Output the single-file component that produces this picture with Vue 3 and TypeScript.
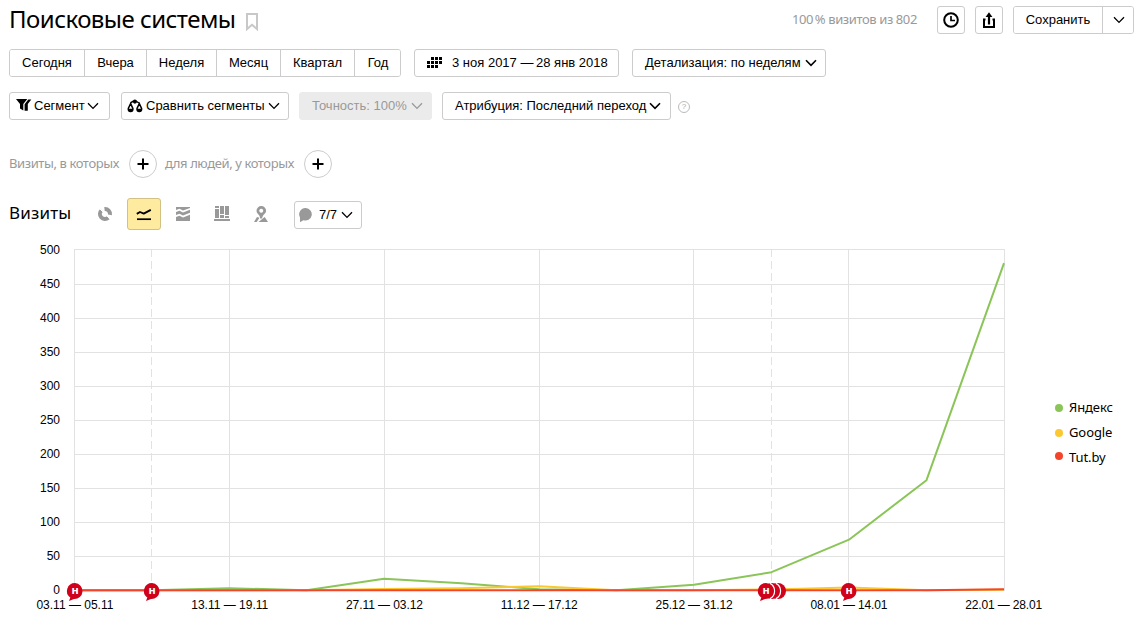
<script setup lang="ts">
interface Period { label: string; width: number }
interface Series { name: string; color: string; ys: number[] }
interface Marker { x: number; extra: number }

const periods: Period[] = [
  { label: 'Сегодня', width: 76 },
  { label: 'Вчера', width: 62 },
  { label: 'Неделя', width: 70 },
  { label: 'Месяц', width: 64 },
  { label: 'Квартал', width: 74 },
  { label: 'Год', width: 46 },
]

const left = 74
const step = 77.5
const rowStep = 34

const yLabels: number[] = [500, 450, 400, 350, 300, 250, 200, 150, 100, 50, 0]
const xLabels: string[] = [
  '03.11 — 05.11', '13.11 — 19.11', '27.11 — 03.12', '11.12 — 17.12',
  '25.12 — 31.12', '08.01 — 14.01', '22.01 — 28.01',
]

const series: Series[] = [
  { name: 'Яндекс', color: '#8bc558', ys: [350, 350, 348, 350, 338.5, 343, 349, 350, 344.5, 332, 299.5, 240, 23] },
  { name: 'Google', color: '#fbc831', ys: [350, 350, 350, 350, 348.8, 348, 346, 350, 350, 349.2, 347.3, 350, 349.5] },
  { name: 'Tut.by', color: '#f4452a', ys: [350, 350, 350, 350, 350, 350, 350, 350, 350, 350, 350, 350, 349] },
]

const markers: Marker[] = [
  { x: 75, extra: 0 },
  { x: 152, extra: 0 },
  { x: 766, extra: 2 },
  { x: 849, extra: 0 },
]

const gridX = (i: number): number => Math.floor(left + i * (step * 2 - 0.1)) + 0.5
const gridXs: number[] = [74.5, 229.5, 384.5, 539.5, gridX(4), gridX(5), 1004.5]
const gridY = (i: number): number => i === 0 ? 9.5 : 10.5 + i * rowStep
const points = (ys: number[]): string => ys.map((y, i) => `${left + i * step},${y + 0.2}`).join(' ')
</script>

<template>
  <div class="page">
    <header class="header">
      <h1>Поисковые системы</h1>
      <svg class="bookmark" width="14" height="20" viewBox="0 0 14 20"><path d="M2 2H12V17L7 12.8L2 17Z" fill="none" stroke="#c8c8c8" stroke-width="2" /></svg>
      <span class="visits">100&#8201;% визитов из 802</span>
      <button class="btn square">
        <svg width="18" height="18" viewBox="0 0 18 18" fill="none" stroke="#000" stroke-width="2"><circle cx="9" cy="9" r="6.8" /><path d="M9 5V9.5H13" stroke-width="1.7" /></svg>
      </button>
      <button class="btn square share">
        <svg width="18" height="18" viewBox="0 0 18 18"><path d="M5.5 8.5H4V16H14V8.5H12.5" fill="none" stroke="#000" stroke-width="2" /><path d="M9 13.5V4" stroke="#000" stroke-width="2.2" /><path d="M5.6 6L9 1.2L12.4 6Z" /></svg>
      </button>
      <div class="group save">
        <button class="save-main">Сохранить</button>
        <button class="save-more"><svg class="chev" width="12" height="8" viewBox="0 0 12 8"><path d="M1 1.2L6 6.4L11 1.2" /></svg></button>
      </div>
    </header>

    <div class="row periods">
      <div class="group">
        <button v-for="p in periods" :key="p.label" :style="{ width: p.width + 'px' }">{{ p.label }}</button>
      </div>
      <button class="btn date">
        <svg width="16" height="12" viewBox="0 0 16 12"><path d="M4 0h3v3h-3zM8 0h3v3h-3zM12 0h3v3h-3zM0 4h3v3h-3zM4 4h3v3h-3zM8 4h3v3h-3zM12 4h3v3h-3zM0 8h3v3h-3zM4 8h3v3h-3zM8 8h3v3h-3z" /></svg>
        <span class="date-text">3 ноя 2017 —&#8201;28 янв 2018</span>
      </button>
      <button class="btn detail"><span>Детализация: по неделям</span><svg class="chev bold" width="12" height="8" viewBox="0 0 12 8"><path d="M1 1.2L6 6.4L11 1.2" /></svg></button>
    </div>

    <div class="row segments">
      <button class="btn segment">
        <svg class="funnel" width="16" height="13" viewBox="0 0 16 13"><path d="M0 0H11.3L7.3 5V11.5L4 9.5V5Z" /><path d="M12.3 .6H15.3L11.8 5V11.8H8.6V5.3Z" /></svg>
        <span>Сегмент</span><svg class="chev" width="12" height="8" viewBox="0 0 12 8"><path d="M1 1.2L6 6.4L11 1.2" /></svg>
      </button>
      <button class="btn compare">
        <svg class="scales" width="16" height="14" viewBox="0 0 16 14"><g fill="none" stroke="#000" stroke-width="1.5"><path d="M3.6 4.6L1.3 9.4Q1 12.5 3.6 12.5Q6.2 12.5 5.9 9.4Z" /><path d="M12.3 4.6L10 9.4Q9.7 12.5 12.3 12.5Q14.9 12.5 14.6 9.4Z" /></g><path d="M1.2 9.8H6Q6 12.8 3.6 12.8T1.2 9.8M9.9 9.8H14.7Q14.7 12.8 12.3 12.8T9.9 9.8M3.4 3L5.9 1.6L6.4 3L3.9 4.6ZM9.6 1.8L12 3.2L12 4.6L9.2 3.2Z" /><circle cx="7.9" cy="2.6" r="2.1" /></svg>
        <span>Сравнить сегменты</span><svg class="chev" width="12" height="8" viewBox="0 0 12 8"><path d="M1 1.2L6 6.4L11 1.2" /></svg>
      </button>
      <button class="btn accuracy"><span>Точность: 100%</span><svg class="chev" width="12" height="8" viewBox="0 0 12 8"><path d="M1 1.2L6 6.4L11 1.2" /></svg></button>
      <button class="btn attribution"><span>Атрибуция: Последний переход</span><svg class="chev bold" width="12" height="8" viewBox="0 0 12 8"><path d="M1 1.2L6 6.4L11 1.2" /></svg></button>
      <span class="help">?</span>
    </div>

    <div class="row filters">
      <span class="f1">Визиты, в которых</span>
      <button class="plus"><svg width="12" height="12" viewBox="0 0 12 12"><path d="M6 .5V11.5M.5 6H11.5" stroke="#000" stroke-width="2" /></svg></button>
      <span class="f2">для людей, у которых</span>
      <button class="plus"><svg width="12" height="12" viewBox="0 0 12 12"><path d="M6 .5V11.5M.5 6H11.5" stroke="#000" stroke-width="2" /></svg></button>
    </div>

    <div class="row views">
      <h2>Визиты</h2>
      <div class="tabs">
        <button class="tab"><svg width="18" height="18" viewBox="0 0 18 18" fill="none" stroke="#999" stroke-width="4"><path d="M5.7 5.2A5 5 0 0 0 12.3 12.8" /><path d="M8.5 4A5 5 0 0 1 14 9.8" /><path d="M3.2 3.2L14.5 14.5" stroke="#fff" stroke-width="1" /></svg></button>
        <button class="tab active"><svg width="18" height="18" viewBox="0 0 18 18" fill="none" stroke="#000" stroke-width="1.9"><path d="M1.8 8.8L5 7L8.7 8.6L15.8 4.9" stroke-linejoin="round" /><path d="M2 14.2H16" stroke-width="1.7" /></svg></button>
        <button class="tab"><svg width="18" height="18" viewBox="0 0 18 18" fill="#999"><path d="M2 2H16V3L9 5.5L5.5 3.8L2 5Z" /><path d="M2 7L5.5 5.8L9 7.5L16 4.8V7.8L9 10.5L5.5 8.8L2 10Z" /><path d="M2 12L5.5 10.8L9 12.5L16 9.8V16H2Z" /></svg></button>
        <button class="tab"><svg width="18" height="18" viewBox="0 0 18 18" fill="#999"><path d="M1 14H17V16H1ZM2 1H6V3H2ZM2 4H6V13H2ZM7 1H11V9H7ZM7 10H11V13H7ZM12 1H16V10H12ZM12 11H16V13H12Z" /></svg></button>
        <button class="tab"><svg width="18" height="18" viewBox="0 0 18 18" fill="#999"><path fill-rule="evenodd" d="M9.3 1A4.8 4.8 0 0 0 4.5 5.8C4.5 8.8 8 9.5 8.2 13.5H10.2C10.4 9.5 14.1 8.8 14.1 5.8A4.8 4.8 0 0 0 9.3 1ZM9.3 3.8A2 2 0 1 1 9.2 3.8Z" /><path d="M5 12L2 17H4.7L7.5 12.8ZM12.7 12L6.5 16.9H16Z" /></svg></button>
      </div>
      <button class="btn notes">
        <svg width="15" height="16" viewBox="0 0 15 16" fill="#999"><path d="M7.8 1A6.3 6.3 0 1 1 5.3 13.2L2 15.2V10.4A6.3 6.3 0 0 1 7.8 1Z" /></svg>
        <span>7/7</span><svg class="chev" width="12" height="8" viewBox="0 0 12 8"><path d="M1 1.2L6 6.4L11 1.2" /></svg>
      </button>
    </div>

    <div class="report">
      <svg class="chart" width="1055" height="385" viewBox="0 0 1055 385">
        <g stroke="#e2e2e2" stroke-width="1">
          <line v-for="(_, i) in yLabels" :key="'h' + i" :x1="left" x2="1005" :y1="gridY(i)" :y2="gridY(i)" />
          <line v-for="x in gridXs" :key="'v' + x" :x1="x" :x2="x" y1="9" y2="350" />
          <line v-for="x in [151.5, 771.5]" :key="x" :x1="x" :x2="x" y1="9" y2="350" stroke-dasharray="8 4" />
        </g>
        <g class="axis">
          <text v-for="(v, i) in yLabels" :key="v" x="60" :y="14 + i * rowStep" text-anchor="end">{{ v }}</text>
          <text v-for="(v, i) in xLabels" :key="v" :x="left + 0.9 + i * 154.8" y="369" text-anchor="middle" textLength="77">{{ v }}</text>
        </g>
        <polyline v-for="s in series" :key="s.name" :points="points(s.ys)" fill="none" :stroke="s.color" stroke-width="2" stroke-linejoin="round" />
        <g v-for="m in markers" :key="m.x" :transform="`translate(${m.x} 351)`">
          <g v-for="n in m.extra" :key="n" :transform="`translate(${(m.extra - n + 1) * 6} 0)`">
            <circle r="8" fill="#d0021b" />
            <path v-if="n > 1" d="M4 -7.6A8.6 8.6 0 0 1 4 7.6" fill="none" stroke="#fff" stroke-width="1.2" />
          </g>
          <path v-if="m.extra" d="M4 -7.6A8.6 8.6 0 0 1 4 7.6" fill="none" stroke="#fff" stroke-width="1.2" />
          <path d="M0 -8A8 8 0 1 1 -1 8L-6 10L-4.7 6.5A8 8 0 0 1 0 -8Z" fill="#d0021b" />
          <text class="h" y="3.2" text-anchor="middle">н</text>
        </g>
      </svg>
      <ul class="legend">
        <li v-for="s in series" :key="s.name"><svg width="8" height="8" viewBox="0 0 8 8"><circle cx="4" cy="4" r="4" :fill="s.color" /></svg><span>{{ s.name }}</span></li>
      </ul>
    </div>
  </div>
</template>

<style>
html, body { margin: 0; background: #fff; overflow: hidden; }
</style>

<style scoped>
.page { width: 1136px; height: 625px; overflow: hidden; box-sizing: border-box; padding: 6px 0 0 9px; font: 13px/16px "Liberation Sans", Arial, sans-serif; color: #000; background: #fff; }
button { font: inherit; color: inherit; margin: 0; padding: 0; background: #fff; box-sizing: border-box; flex: none; white-space: nowrap; }
svg { flex: none; display: block; }
h1, h2, .visits, .filters, .legend { font-family: "Noto Sans", "Open Sans", sans-serif; font-weight: 400; white-space: nowrap; }
.header { display: flex; align-items: center; height: 28px; }
h1 { margin: 0; width: 236px; font-size: 24px; line-height: 26px; padding-bottom: 2px; letter-spacing: -0.54px; }
.bookmark { margin-top: 4px; }
.visits { margin-left: auto; margin-right: 20px; padding-bottom: 2px; width: 125px; font-size: 13px; color: #999; letter-spacing: -0.4px; }
.btn { height: 28px; display: flex; align-items: center; border: 1px solid #ccc; border-radius: 3px; }
.square { width: 28px; justify-content: center; }
.share { margin: 0 10px; }
.group { display: flex; height: 28px; box-sizing: border-box; border: 1px solid #ccc; border-radius: 3px; overflow: hidden; }
.group button { border: 0; border-right: 1px solid #ccc; height: 26px; }
.group button:first-child { margin-left: -1px; padding-left: 1px; }
.group button:last-child { border-right: 0; margin-right: -1px; }
.save { margin-right: 2px; width: 121px; }
.save .save-main { width: 90px; }
.save .save-more { width: 31px; display: flex; align-items: center; justify-content: center; }
.chev path { fill: none; stroke: currentColor; stroke-width: 1.3; }
.chev.bold path { stroke-width: 1.6; }
.row { display: flex; align-items: center; height: 28px; }
.periods { margin-top: 15px; }
.date { margin-left: 13px; width: 205px; padding-left: 12px; gap: 9px; }
.detail { margin-left: 13px; width: 194px; padding-left: 12px; gap: 4px; }
.segments { margin-top: 15px; }
.segment { width: 101px; padding-left: 6px; gap: 2px; }
.segment .funnel { margin-bottom: 2px; }
.compare { width: 168px; margin-left: 11px; padding-left: 5px; gap: 3px; }
.accuracy { width: 133px; margin-left: 10px; padding-left: 12px; gap: 4px; background: #ebebeb; border-color: #ebebeb; color: #999; }
.attribution { width: 229px; margin-left: 10px; padding-left: 12px; gap: 3px; }
.help { box-sizing: border-box; width: 12px; height: 12px; margin: 2px 0 0 7px; border: 1px solid #bbb; border-radius: 50%; font-size: 8px; line-height: 10px; text-align: center; color: #aaa; }
.filters { margin-top: 30px; color: #999; letter-spacing: -0.4px; }
.filters span { padding-bottom: 2px; }
.f1 { width: 120px; }
.f2 { width: 139px; margin-left: 8px; }
.plus { width: 28px; height: 28px; border: 1px solid #ccc; border-radius: 50%; display: flex; align-items: center; justify-content: center; }
.views { margin-top: 20px; height: 32px; }
h2 { width: 79px; margin: 0; padding-bottom: 2px; font-size: 17px; line-height: 24px; letter-spacing: 0.2px; }
.tabs { display: flex; gap: 5px; }
.tab { width: 34px; height: 32px; border: 1px solid transparent; border-radius: 3px; display: flex; align-items: center; justify-content: center; }
.tab.active { background: #ffeba0; border-color: #d1c184; }
.notes { width: 68px; margin: 2px 0 0 16px; padding-left: 3px; }
.notes span { margin: 0 4px 0 6px; }
.report { display: flex; height: 385px; margin: 10px 0 0 -9px; }
.axis text { font: 12px "Liberation Sans", Arial, sans-serif; }
.h { font: bold 11px "Noto Sans", sans-serif; fill: #fff; }
.legend { list-style: none; padding: 0; margin: 155px 0 0; line-height: 25px; letter-spacing: -0.1px; }
.legend li { display: flex; align-items: center; gap: 6px; height: 25px; }
.legend li:last-child svg { margin-top: -4px; }
</style>
